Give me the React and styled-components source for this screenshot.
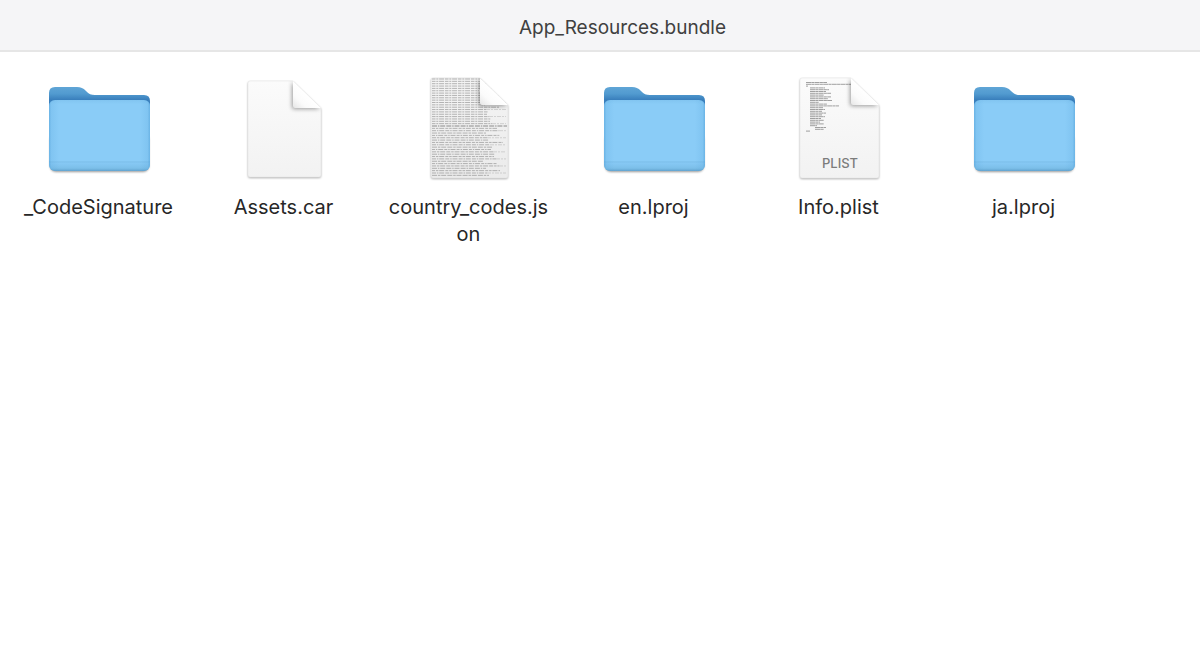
import React from "react";
import styled, { createGlobalStyle } from "styled-components";

const GlobalStyle = createGlobalStyle`
  body {
    margin: 0;
    background: #ffffff;
    color: #272727;
    font-family: Inter, "Liberation Sans", sans-serif;
  }
`;

const TitleBar = styled.header`
  display: flex;
  align-items: center;
  justify-content: center;
  padding: 16px 0 10px 45px;
  background: #f5f5f7;
  border-bottom: 2px solid #e6e6e6;
`;

const Title = styled.h1`
  margin: 0;
  font-size: 19px;
  font-weight: 400;
  line-height: 24px;
  color: #404040;
`;

const FileGrid = styled.main`
  display: grid;
  grid-template-columns: repeat(auto-fill, 185px);
  padding: 22px 6px;
`;

const FileItem = styled.figure`
  display: flex;
  flex-direction: column;
  align-items: center;
  margin: 0;
`;

const Icon = styled.svg`
  width: 119px;
  height: 112px;
  flex: none;
`;

const FileName = styled.figcaption`
  width: 169px;
  margin-top: 8px;
  font-size: 20px;
  line-height: 27px;
  text-align: center;
  word-break: break-all;
`;

const FolderIcon = ({ id }) => (
  <Icon viewBox="0 0 119 112" aria-hidden="true">
    <defs>
      <linearGradient id={`${id}-back`} x1="0" y1="0" x2="0" y2="1">
        <stop offset="0" stopColor="#5fa5d6" />
        <stop offset="0.18" stopColor="#529bd0" />
        <stop offset="0.34" stopColor="#3a80bd" />
        <stop offset="1" stopColor="#3a80bd" />
      </linearGradient>
      <linearGradient id={`${id}-front`} x1="0" y1="0" x2="0" y2="1">
        <stop offset="0" stopColor="#82c5f1" />
        <stop offset="0.06" stopColor="#8accf7" />
        <stop offset="0.86" stopColor="#8accf7" />
        <stop offset="0.87" stopColor="#7dbfea" />
        <stop offset="0.89" stopColor="#86c8f4" />
        <stop offset="0.96" stopColor="#7cbfe9" />
        <stop offset="1" stopColor="#62a3cf" />
      </linearGradient>
      <linearGradient id={`${id}-sides`} x1="0" y1="0" x2="1" y2="0">
        <stop offset="0" stopColor="#4b9bd3" stopOpacity="0.5" />
        <stop offset="0.025" stopColor="#4b9bd3" stopOpacity="0.15" />
        <stop offset="0.1" stopColor="#4b9bd3" stopOpacity="0" />
        <stop offset="0.9" stopColor="#4b9bd3" stopOpacity="0" />
        <stop offset="0.975" stopColor="#4b9bd3" stopOpacity="0.15" />
        <stop offset="1" stopColor="#4b9bd3" stopOpacity="0.5" />
      </linearGradient>
      <filter id={`${id}-shadow`} x="-10%" y="-10%" width="120%" height="120%">
        <feGaussianBlur stdDeviation="1" />
      </filter>
    </defs>
    <rect x="11" y="60" width="99" height="38" rx="6" fill="#000" opacity="0.4" filter={`url(#${id}-shadow)`} />
    <path
      d="M10 19 Q10 13 16 13 H38 C42 13 44 14 47 17 C50 20 52 21 56 21 H105 Q111 21 111 27 V50 H10 Z"
      fill={`url(#${id}-back)`}
    />
    <rect x="10" y="26" width="101" height="71" rx="6" fill={`url(#${id}-front)`} />
    <rect x="10" y="26" width="101" height="71" rx="6" fill={`url(#${id}-sides)`} />
  </Icon>
);

const DocumentIcon = ({ id, left, right, top, bottom, fold, children }) => {
  const foldX = right - fold;
  const foldY = top + fold - 1;
  const outline = `M${left + 2} ${top} H${foldX} L${right} ${foldY} V${bottom - 2} Q${right} ${bottom} ${right - 2} ${bottom} H${left + 2} Q${left} ${bottom} ${left} ${bottom - 2} V${top + 2} Q${left} ${top} ${left + 2} ${top} Z`;
  const flap = `M${foldX} ${top} L${right} ${foldY} H${foldX + 2} Q${foldX} ${foldY} ${foldX} ${foldY - 2} Z`;

  return (
    <Icon viewBox="0 0 119 112" aria-hidden="true">
      <defs>
        <linearGradient id={`${id}-paper`} x1="0" y1="0" x2="0" y2="1">
          <stop offset="0" stopColor="#fbfbfb" />
          <stop offset="1" stopColor="#f2f2f2" />
        </linearGradient>
        <linearGradient id={`${id}-flap`} x1="0" y1="1" x2="0.5" y2="0.5">
          <stop offset="0" stopColor="#e6e6e6" />
          <stop offset="0.5" stopColor="#fbfbfb" />
          <stop offset="1" stopColor="#ffffff" />
        </linearGradient>
        <clipPath id={`${id}-clip`}>
          <path d={outline} />
        </clipPath>
        <filter id={`${id}-shadow`} x="-20%" y="-20%" width="140%" height="140%">
          <feGaussianBlur stdDeviation="1" />
        </filter>
        <filter id={`${id}-soft`} x="-40%" y="-40%" width="180%" height="180%">
          <feGaussianBlur stdDeviation="2" />
        </filter>
      </defs>
      <path d={outline} transform="translate(0 1)" fill="#000" opacity="0.35" filter={`url(#${id}-shadow)`} />
      <path d={outline} fill={`url(#${id}-paper)`} stroke="#e6e6e6" strokeWidth="0.6" />
      <g clipPath={`url(#${id}-clip)`}>
        {children}
        <path d={flap} transform="translate(-1 1)" fill="#000" opacity="0.38" filter={`url(#${id}-soft)`} />
      </g>
      <path d={flap} fill={`url(#${id}-flap)`} />
    </Icon>
  );
};

// Rows of a dense text preview: the lower half runs a little wider
const jsonRows = Array.from({ length: 42 }, (_, i) => ({
  y: 5 + i * 2.35,
  end: (i < 20 ? 78 : 82) + ((i * 7) % 5) * 3 - (i % 3) * 4,
  dash: i < 20 ? "3.5 0.8 2 0.8 5 0.9" : `${3 + (i % 3)} 0.9 ${1.5 + (i % 2)} 0.8 5 1.1`,
}));

const plistRows = [
  [27, 48], [27, 72], [27, 29], [31, 46], [31, 50], [31, 47], [31, 52],
  [31, 45], [31, 52], [31, 49], [31, 53], [31, 40], [31, 48], [31, 60],
  [31, 44], [31, 46], [31, 43], [31, 47], [31, 43], [31, 46], [31, 42],
  [31, 45], [31, 41], [31, 45], [31, 38], [36, 47], [36, 45], [27, 31],
];

const JsonIcon = () => (
  <DocumentIcon id="json" left={22} right={99} top={4} bottom={104} fold={28}>
    <rect x="22" y="4" width="77" height="100" fill="#8c8c8c" opacity="0.06" />
    {jsonRows.map((row, i) => (
      <line
        key={row.y}
        x1="23"
        x2={i === 20 ? 98 : row.end}
        y1={row.y}
        y2={row.y}
        stroke="#555"
        strokeWidth="1"
        strokeDasharray={row.dash}
        opacity={i === 20 ? 0.65 : 0.4}
      />
    ))}
    {jsonRows.filter((_, i) => i % 3 === 1).map((row) => (
      <line
        key={row.y}
        x1={row.end}
        x2="97"
        y1={row.y}
        y2={row.y}
        stroke="#555"
        strokeWidth="0.8"
        strokeDasharray="4 1 2 1"
        opacity="0.26"
      />
    ))}
  </DocumentIcon>
);

const PlistIcon = () => (
  <DocumentIcon id="plist" left={21} right={100} top={4} bottom={104} fold={28}>
    {plistRows.map(([start, end], i) => (
      <line
        key={i}
        x1={start}
        x2={end}
        y1={8.5 + i * 1.8}
        y2={8.5 + i * 1.8}
        stroke="#555"
        strokeWidth="0.9"
        strokeDasharray="5 0.3 3 0.3"
        opacity="0.6"
      />
    ))}
    <text
      x="61"
      y="94"
      textAnchor="middle"
      fontFamily="Inter, sans-serif"
      fontSize="13"
      fontWeight="500"
      fill="#7c7c7c"
    >
      PLIST
    </text>
  </DocumentIcon>
);

const BlankIcon = () => (
  <DocumentIcon id="blank" left={24} right={97} top={7} bottom={103} fold={28} />
);

const files = [
  { name: "_CodeSignature", icon: <FolderIcon id="signature" /> },
  { name: "Assets.car", icon: <BlankIcon /> },
  { name: "country_codes.json", icon: <JsonIcon /> },
  { name: "en.lproj", icon: <FolderIcon id="en" /> },
  { name: "Info.plist", icon: <PlistIcon /> },
  { name: "ja.lproj", icon: <FolderIcon id="ja" /> },
];

const App = () => (
  <>
    <GlobalStyle />
    <TitleBar>
      <Title>App_Resources.bundle</Title>
    </TitleBar>
    <FileGrid>
      {files.map((file) => (
        <FileItem key={file.name}>
          {file.icon}
          <FileName>{file.name}</FileName>
        </FileItem>
      ))}
    </FileGrid>
  </>
);

export default App;
